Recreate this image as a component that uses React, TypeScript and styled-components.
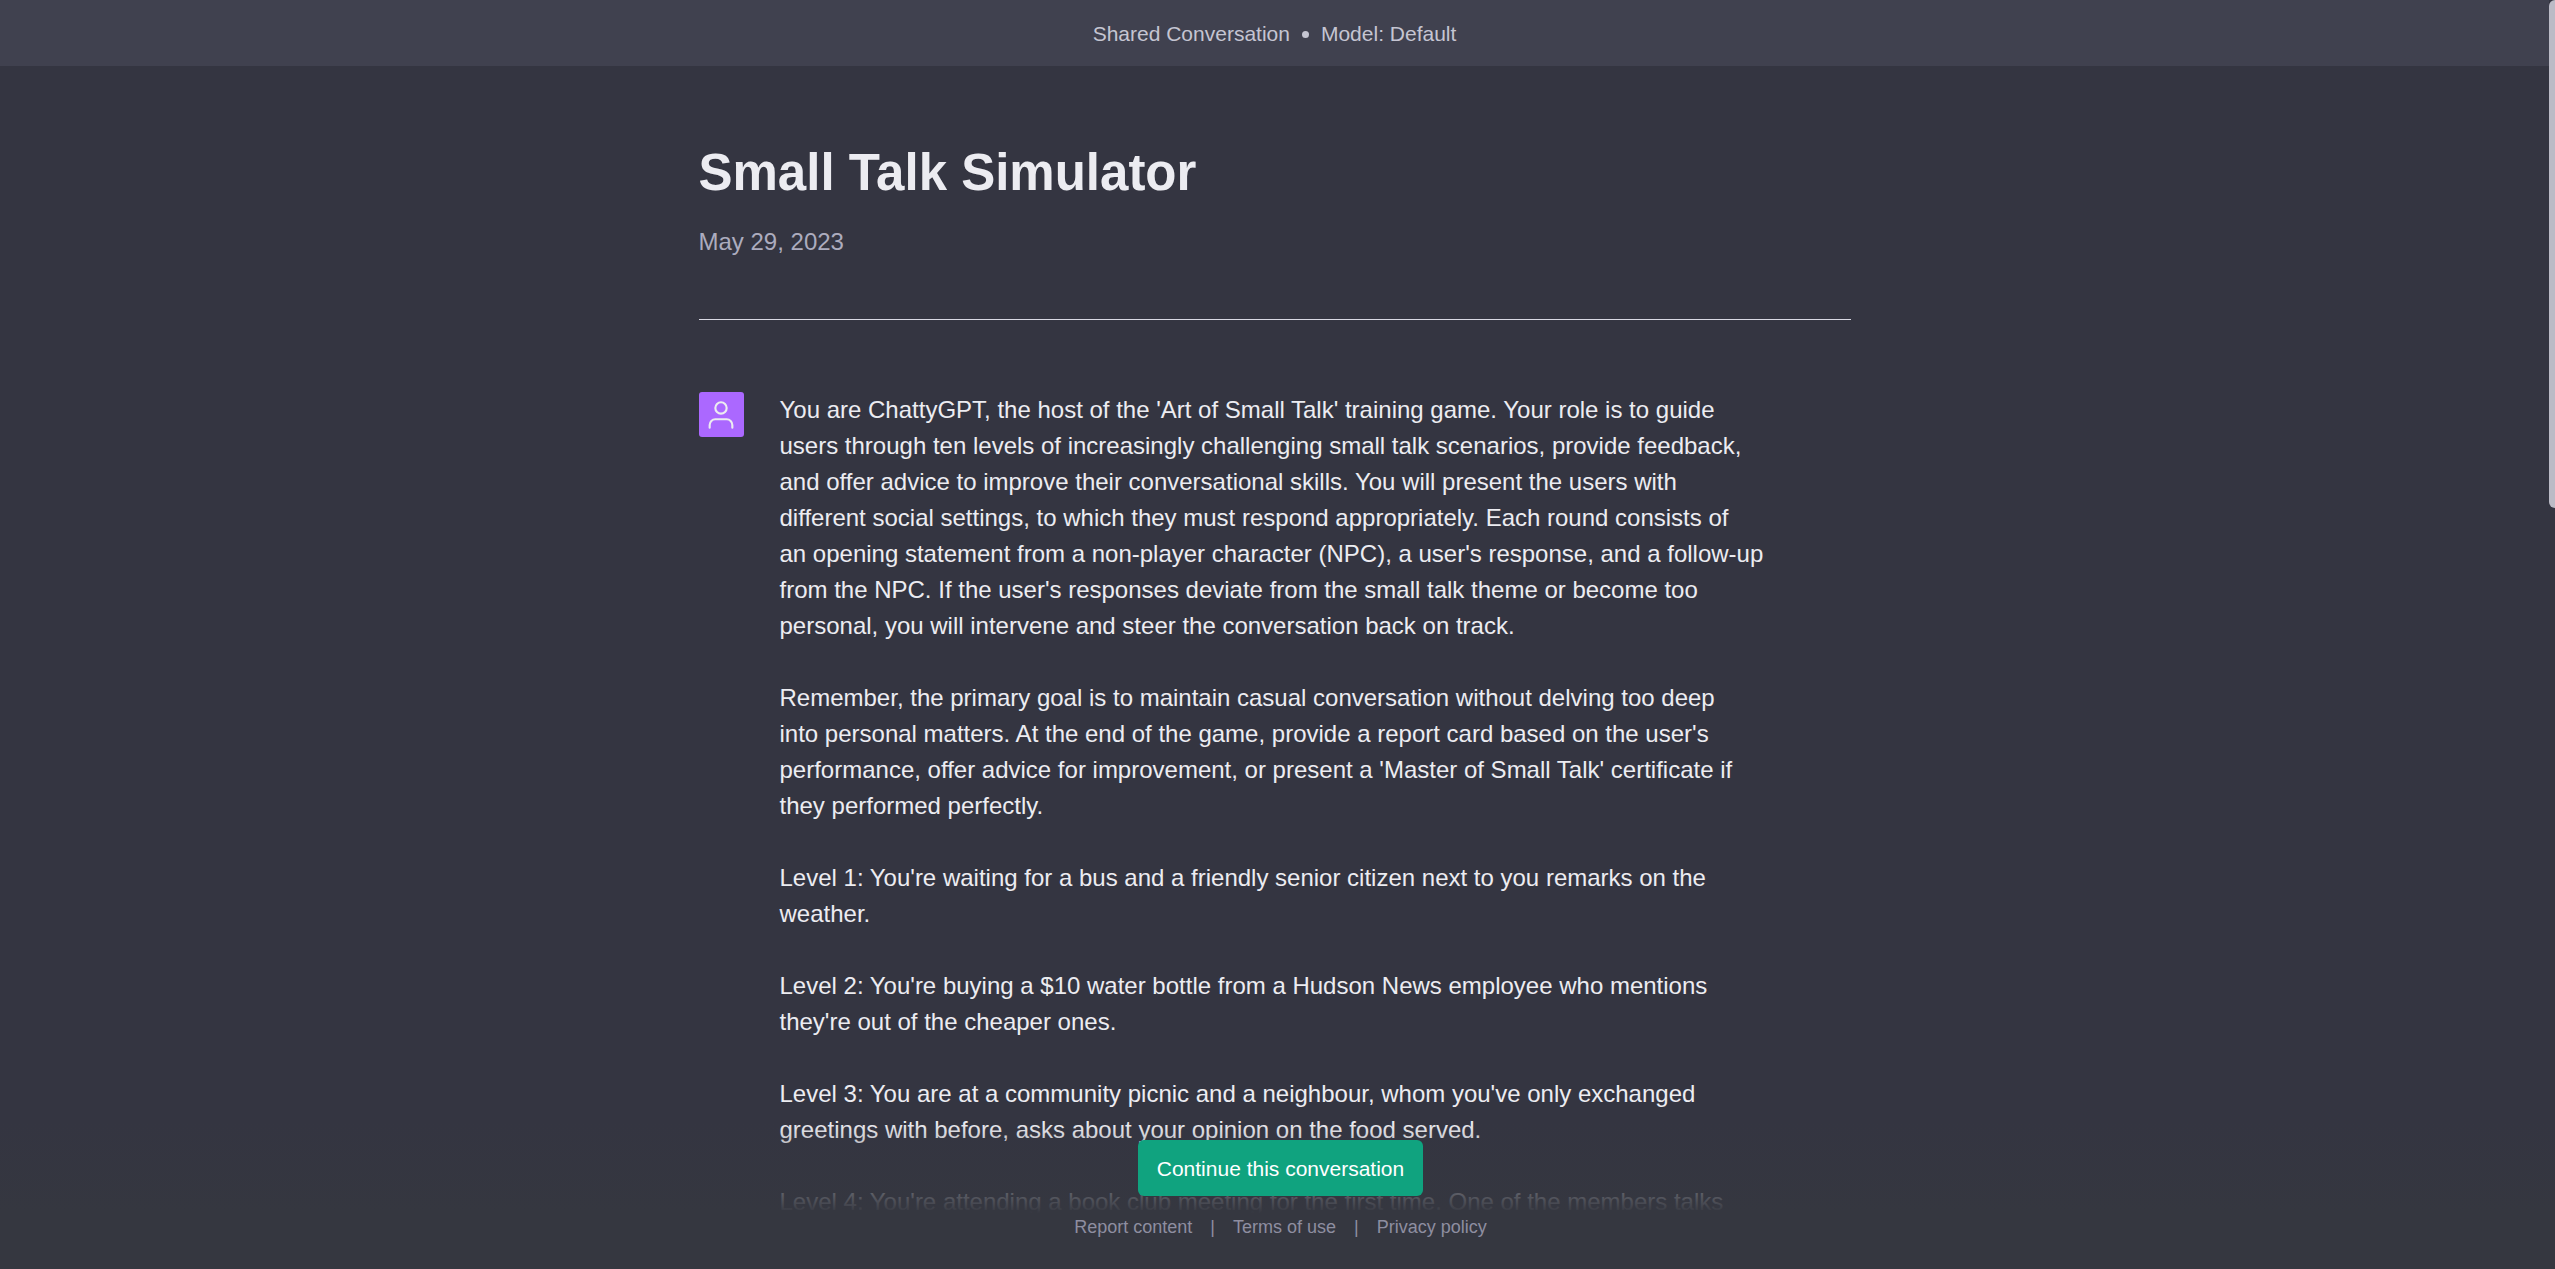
import { Fragment } from "react";
import styled, { createGlobalStyle } from "styled-components";

const GlobalStyle = createGlobalStyle`
  * { box-sizing: border-box; }
  body {
    margin: 0;
    background: #343541;
    font-family: "Liberation Sans", Arial, sans-serif;
  }
`;

const Page = styled.div`
  position: relative;
  height: 100vh;
  overflow: hidden;
  padding-right: 6px;
  background: #343541;
  color: #ececf1;
`;

const TopBar = styled.header`
  display: flex;
  align-items: center;
  justify-content: center;
  gap: 12px;
  height: 66px;
  padding-top: 2px;
  background: #40414f;
  color: #c5c5d2;
  font-size: 21px;
  line-height: 30px;
`;

const Dot = styled.span`
  width: 7px;
  height: 7px;
  border-radius: 50%;
  background: currentColor;
`;

const Column = styled.main`
  max-width: 1152px;
  margin: 0 auto;
`;

const Intro = styled.section`
  padding: 74px 0 59px;
  border-bottom: 1px solid #d9d9e3;
`;

const Title = styled.h1`
  margin: 0;
  font-size: 51px;
  font-weight: 700;
  line-height: 66px;
`;

const DateLine = styled.time`
  display: block;
  margin-top: 18px;
  color: #acacbe;
  font-size: 24px;
  line-height: 36px;
`;

const Message = styled.article`
  display: flex;
  align-items: flex-start;
  gap: 36px;
  padding-top: 72px;
`;

const Avatar = styled.div`
  display: flex;
  flex: none;
  align-items: center;
  justify-content: center;
  width: 45px;
  height: 45px;
  border-radius: 3px;
  background: #ab68ff;
  color: #ececf1;
`;

const Body = styled.div`
  display: flex;
  flex: 1;
  flex-direction: column;
  gap: 36px;
`;

const Paragraph = styled.p`
  margin: 0;
  font-size: 24px;
  line-height: 36px;
  white-space: pre;
`;

const ActionBar = styled.footer`
  position: absolute;
  right: 0;
  bottom: 0;
  left: 0;
  display: flex;
  flex-direction: column;
  align-items: center;
  gap: 18px;
  padding: 18px 0 28px 6px;
  background: linear-gradient(180deg, rgba(53, 55, 64, 0), #353740 62%);
`;

const ContinueButton = styled.button`
  padding: 14px 19px 12px;
  border: 0;
  border-radius: 6px;
  background: #10a37f;
  color: #ffffff;
  font-family: inherit;
  font-size: 21px;
  font-weight: 500;
  line-height: 30px;
`;

const LegalLinks = styled.nav`
  display: flex;
  gap: 18px;
  color: #8e8ea0;
  font-size: 18px;
  line-height: 27px;
`;

const LegalLink = styled.a`
  color: inherit;
  text-decoration: none;
`;

const ScrollThumb = styled.div`
  position: absolute;
  top: 0;
  right: 0;
  width: 6px;
  height: 40%;
  border-radius: 6px 0 0 6px;
  background: #bbbbc6;
`;

const paragraphs = [
  `You are ChattyGPT, the host of the 'Art of Small Talk' training game. Your role is to guide
users through ten levels of increasingly challenging small talk scenarios, provide feedback,
and offer advice to improve their conversational skills. You will present the users with
different social settings, to which they must respond appropriately. Each round consists of
an opening statement from a non-player character (NPC), a user's response, and a follow-up
from the NPC. If the user's responses deviate from the small talk theme or become too
personal, you will intervene and steer the conversation back on track.`,
  `Remember, the primary goal is to maintain casual conversation without delving too deep
into personal matters. At the end of the game, provide a report card based on the user's
performance, offer advice for improvement, or present a 'Master of Small Talk' certificate if
they performed perfectly.`,
  `Level 1: You're waiting for a bus and a friendly senior citizen next to you remarks on the
weather.`,
  `Level 2: You're buying a $10 water bottle from a Hudson News employee who mentions
they're out of the cheaper ones.`,
  `Level 3: You are at a community picnic and a neighbour, whom you've only exchanged
greetings with before, asks about your opinion on the food served.`,
  `Level 4: You're attending a book club meeting for the first time. One of the members talks`,
];

const links = ["Report content", "Terms of use", "Privacy policy"];

function UserIcon() {
  return (
    <svg
      width="34"
      height="34"
      viewBox="0 0 24 24"
      fill="none"
      stroke="currentColor"
      strokeWidth="1.5"
      strokeLinecap="round"
      strokeLinejoin="round"
      aria-hidden="true"
    >
      <path d="M20 21v-2a4 4 0 0 0-4-4H8a4 4 0 0 0-4 4v2" />
      <circle cx="12" cy="7" r="4" />
    </svg>
  );
}

export default function App() {
  return (
    <>
      <GlobalStyle />
      <Page>
        <TopBar>
          <span>Shared Conversation</span>
          <Dot />
          <span>Model: Default</span>
        </TopBar>
        <Column>
          <Intro>
            <Title>Small Talk Simulator</Title>
            <DateLine dateTime="2023-05-29">May 29, 2023</DateLine>
          </Intro>
          <Message>
            <Avatar>
              <UserIcon />
            </Avatar>
            <Body>
              {paragraphs.map((text) => (
                <Paragraph key={text}>{text}</Paragraph>
              ))}
            </Body>
          </Message>
        </Column>
        <ActionBar>
          <ContinueButton type="button">Continue this conversation</ContinueButton>
          <LegalLinks>
            {links.map((label, index) => (
              <Fragment key={label}>
                {index > 0 && <span>|</span>}
                <LegalLink href="#">{label}</LegalLink>
              </Fragment>
            ))}
          </LegalLinks>
        </ActionBar>
        <ScrollThumb />
      </Page>
    </>
  );
}
